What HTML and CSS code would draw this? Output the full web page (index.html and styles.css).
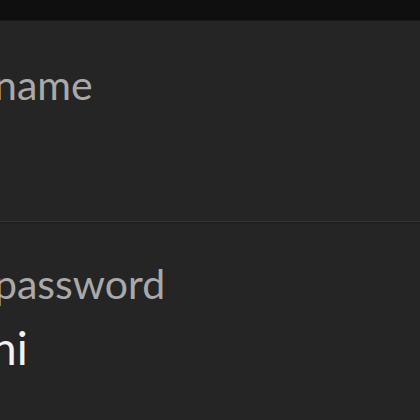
FILE: index.html
```html
<!DOCTYPE html>
<html lang="en">

<head>
    <meta charset="UTF-8">
    <meta name="viewport" content="width=device-width, initial-scale=1.0">
    <title>Account</title>
    <link rel="stylesheet" href="styles.css">
</head>

<body>

    <div class="statusbar"></div>

    <div class="field field-name">
        <p class="label">name</p>
    </div>

    <div class="field field-password">
        <p class="label">password</p>
        <p class="value">hi</p>
    </div>

</body>

</html>
```

FILE: styles.css
```css
body {
    margin: 0;
    padding: 0;
    background-color: #252525;
    font-family: Lato, "Noto Sans", sans-serif;
    overflow: hidden;
}

.statusbar {
    height: 20px;
    background-color: #0f0f0f;
    border-bottom: 1px solid #181818;
}

.field {
    overflow: hidden;
}

.field-name {
    height: 200px;
    border-bottom: 1px solid #353535;
    box-shadow: 0 1px 0 #1c1c1c;
}

.label {
    margin: 0;
    color: #a9a9a9;
    font-size: 41px;
    line-height: 41px;
    margin-left: -6px;
}

.field-name .label {
    margin-top: 43px;
}

.field-password .label {
    margin-top: 41px;
}

.value {
    margin: 21px 0 0 -9px;
    color: #f2f2f2;
    font-size: 46px;
    line-height: 46px;
}
```
